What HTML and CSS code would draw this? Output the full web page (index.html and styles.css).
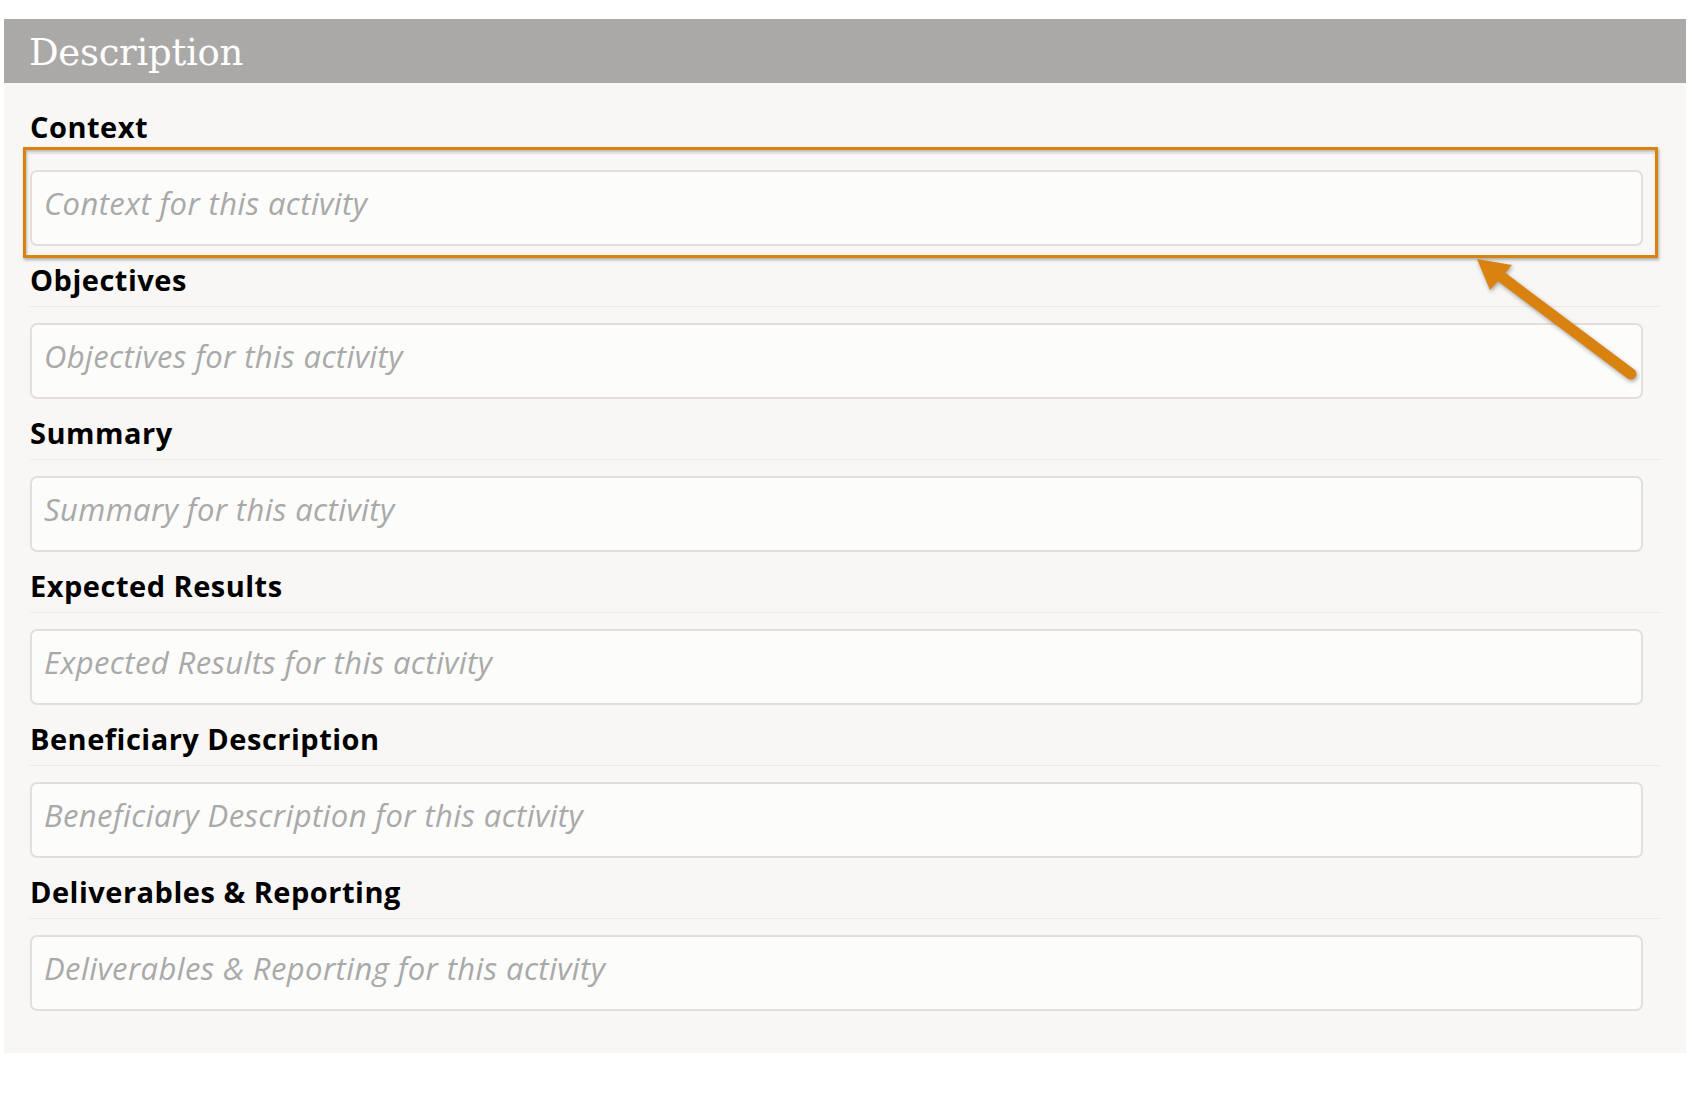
FILE: index.html
```html
<!DOCTYPE html>
<html lang="en">
<head>
<meta charset="utf-8">
<title>Description</title>
<link rel="stylesheet" href="styles.css">
</head>
<body>
<div class="page">
  <section class="panel">
    <h2 class="panel-title">Description</h2>
    <div class="panel-body">
      <div class="field">
        <div class="field-label">Context</div>
        <input class="field-input" type="text" placeholder="Context for this activity">
      </div>
      <div class="field">
        <div class="field-label">Objectives</div>
        <input class="field-input" type="text" placeholder="Objectives for this activity">
      </div>
      <div class="field">
        <div class="field-label">Summary</div>
        <input class="field-input" type="text" placeholder="Summary for this activity">
      </div>
      <div class="field">
        <div class="field-label">Expected Results</div>
        <input class="field-input" type="text" placeholder="Expected Results for this activity">
      </div>
      <div class="field">
        <div class="field-label">Beneficiary Description</div>
        <input class="field-input" type="text" placeholder="Beneficiary Description for this activity">
      </div>
      <div class="field">
        <div class="field-label">Deliverables &amp; Reporting</div>
        <input class="field-input" type="text" placeholder="Deliverables &amp; Reporting for this activity">
      </div>
    </div>
  </section>

  <div class="highlight-box"></div>
  <svg class="highlight-arrow" width="190" height="140" viewBox="0 0 190 140" aria-hidden="true">
    <line x1="166" y1="124" x2="34" y2="25" stroke="#d9820f" stroke-width="11" stroke-linecap="round"/>
    <polygon points="12,9 47,15 25,40" fill="#d9820f"/>
  </svg>
</div>
</body>
</html>
```

FILE: styles.css
```css
html, body {
  margin: 0;
  padding: 0;
  background: #ffffff;
}

.page {
  position: relative;
  width: 1692px;
  height: 1097px;
  box-sizing: border-box;
  padding: 19px 0 0 4px;
}

.panel {
  width: 1682px;
  background: #f8f7f5;
}

.panel-title {
  margin: 0;
  height: 64px;
  padding: 4px 0 0 25px;
  box-sizing: border-box;
  background: #aaa9a7;
  color: #ffffff;
  font-family: "DejaVu Serif", "Liberation Serif", serif;
  font-weight: 400;
  font-size: 37px;
  line-height: 60px;
  letter-spacing: -0.3px;
}

.panel-body {
  padding: 24px 26px 28px 26px;
}

.field-label {
  font-family: "Open Sans", "Noto Sans", sans-serif;
  font-weight: 700;
  font-size: 29px;
  letter-spacing: 0.5px;
  line-height: 40px;
  color: #000000;
  padding-bottom: 6px;
  border-bottom: 1px solid #ecebe8;
}

.field-input {
  display: block;
  box-sizing: border-box;
  width: calc(100% - 17px);
  height: 76px;
  margin: 16px 0 14px 0;
  padding: 0 12px 10px 12px;
  border: 2px solid #e3ded8;
  border-radius: 7px;
  background: #fcfcfb;
  font-family: "Open Sans", "Noto Sans", sans-serif;
  font-style: italic;
  font-size: 31px;
  letter-spacing: 0.4px;
  color: #333333;
  outline: none;
}

.field-input::placeholder {
  color: #a9a9a9;
  font-style: italic;
  opacity: 1;
}

.highlight-box {
  position: absolute;
  left: 23px;
  top: 147px;
  width: 1635px;
  height: 111px;
  box-sizing: border-box;
  border: 3px solid #d9820f;
  box-shadow: 1px 2px 3px rgba(0, 0, 0, 0.3), inset 1px 2px 3px rgba(0, 0, 0, 0.25);
}

.highlight-arrow {
  position: absolute;
  left: 1465px;
  top: 250px;
  filter: drop-shadow(1px 2px 2px rgba(0, 0, 0, 0.35));
}
```
